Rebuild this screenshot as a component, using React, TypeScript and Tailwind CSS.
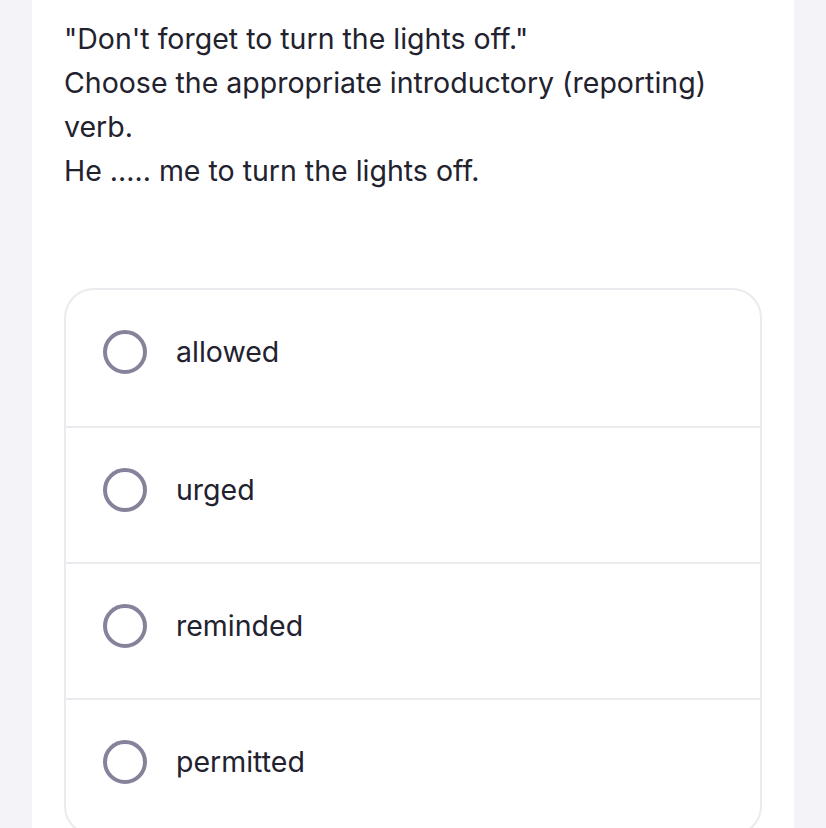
const options = ["allowed", "urged", "reminded", "permitted"];

export default function App() {
  return (
    <div className="min-h-screen bg-[#f3f3f8] font-['Inter',sans-serif] text-[#22222f]">
      <div className="mx-[32px] min-h-[828px] bg-white px-[32px] pt-[17px]">
        <div className="text-[28.5px] leading-[44px]">
          <p>"Don't forget to turn the lights off."</p>
          <p>Choose the appropriate introductory (reporting) verb.</p>
          <p>He ..... me to turn the lights off.</p>
        </div>
        <div className="mt-[95px] overflow-hidden rounded-[30px] border-2 border-[#ebebef]">
          {options.map((opt, i) => (
            <div
              key={opt}
              className={
                "flex h-[136px] items-start gap-[29px] pl-[37px] pt-[40px] " +
                (i > 0 ? "border-t-2 border-[#ebebef]" : "")
              }
            >
              <span className="h-[44px] w-[44px] shrink-0 rounded-full border-4 border-[#85839a]" />
              <span className="text-[28.5px] leading-[44px]">{opt}</span>
            </div>
          ))}
        </div>
      </div>
    </div>
  );
}
